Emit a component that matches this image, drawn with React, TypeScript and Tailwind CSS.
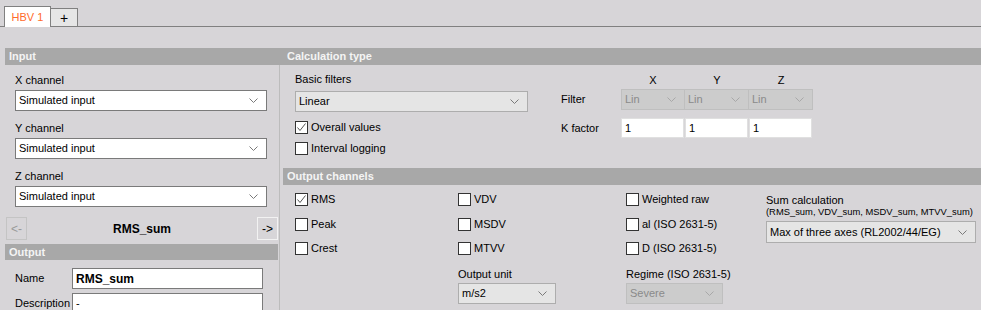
import React from "react";

function Chevron({ color = "#7a7a7a" }: { color?: string }) {
  return (
    <svg width="9" height="5" viewBox="0 0 9 5" className="shrink-0">
      <path d="M0.5 0.5 L4.5 4.5 L8.5 0.5" fill="none" stroke={color} strokeWidth="1" />
    </svg>
  );
}

type SelVariant = "white" | "grey" | "disabled";

function Select({ value, variant, className }: { value: string; variant: SelVariant; className: string }) {
  const v =
    variant === "white"
      ? "bg-white border-[#7a7a7a] text-black"
      : variant === "grey"
      ? "bg-[#e5e5e5] border-[#adadad] text-black"
      : "bg-[#cccccc] border-[#bfbfbf] text-[#8a8a8a]";
  return (
    <div className={`flex items-center justify-between border pl-[3px] pr-[8px] ${v} ${className}`}>
      <span className="leading-none">{value}</span>
      <Chevron color={variant === "disabled" ? "#a8a8a8" : "#7a7a7a"} />
    </div>
  );
}

function Check({ label, checked = false, className = "" }: { label: string; checked?: boolean; className?: string }) {
  return (
    <div className={`flex items-center h-[13px] ${className}`}>
      <div className="w-[13px] h-[13px] border border-[#333333] bg-white flex items-center justify-center shrink-0">
        {checked && (
          <svg width="11" height="11" viewBox="0 0 11 11">
            <path d="M1.5 5.5 L4 8.5 L9.5 1.5" fill="none" stroke="#555555" strokeWidth="1" />
          </svg>
        )}
      </div>
      <span className="ml-[3px] leading-none">{label}</span>
    </div>
  );
}

function Header({ title, className = "" }: { title: string; className?: string }) {
  return (
    <div className={`bg-[#a8a8a8] text-[#f4f4f4] font-bold pl-[4px] flex items-center ${className}`}>{title}</div>
  );
}

export default function App() {
  return (
    <div className="w-[981px] h-[310px] overflow-hidden bg-[#d7d5d8] text-[11px] text-black font-['Liberation_Sans',Arial,sans-serif]">
      {/* Tabs */}
      <div className="flex items-end h-[27px] pl-[4px] border-b border-[#808080]">
        <div className="h-[21px] w-[47px] -mb-px bg-white border border-b-0 border-[#808080] flex items-center justify-center text-[#ff6a2a] text-[11px]">
          HBV 1
        </div>
        <div className="h-[18px] w-[27px] bg-[#e6e6e6] border border-b-0 border-l-0 border-[#808080] flex items-center justify-center text-[14px] leading-none">
          +
        </div>
      </div>

      <div className="flex mt-[21px] pl-[5px]">
        {/* Left column */}
        <div className="w-[278px] shrink-0 flex flex-col">
          <Header title="Input" className="h-[17px]" />
          <div className="mr-[3px] border-r border-[#bcbcbc] flex flex-col h-[300px]">
            <div className="ml-[10px] mt-[8px] h-[14px] flex items-center">X channel</div>
            <Select value="Simulated input" variant="white" className="ml-[10px] mt-[3px] w-[252px] h-[21px]" />
            <div className="ml-[10px] mt-[10px] h-[14px] flex items-center">Y channel</div>
            <Select value="Simulated input" variant="white" className="ml-[10px] mt-[3px] w-[252px] h-[21px]" />
            <div className="ml-[10px] mt-[10px] h-[14px] flex items-center">Z channel</div>
            <Select value="Simulated input" variant="white" className="ml-[10px] mt-[3px] w-[252px] h-[21px]" />
            <div className="mt-[10px] h-[23px] flex items-center pl-[1px] pr-[1px]">
              <div className="w-[21px] h-[23px] border border-[#c4c4c4] flex items-center justify-center text-[#9a9a9a] text-[12px]">
                &lt;-
              </div>
              <div className="flex-1 text-center font-bold text-[12px]">RMS_sum</div>
              <div className="w-[21px] h-[23px] border border-[#f2f2f2] flex items-center justify-center text-[12px]">
                -&gt;
              </div>
            </div>
            <Header title="Output" className="h-[16px] mt-[4px] mr-[1px]" />
            <div className="mt-[8px] flex items-center h-[21px]">
              <span className="w-[67px] pl-[10px]">Name</span>
              <div className="w-[191px] h-[21px] bg-white border border-[#7a7a7a] pl-[3px] flex items-center font-bold text-[12px]">
                RMS_sum
              </div>
            </div>
            <div className="mt-[4px] flex items-center h-[21px]">
              <span className="w-[67px] pl-[10px]">Description</span>
              <div className="w-[191px] h-[21px] bg-white border border-[#7a7a7a] pl-[3px] flex items-center">-</div>
            </div>
          </div>
        </div>

        {/* Right column */}
        <div className="flex-1 flex flex-col">
          <Header title="Calculation type" className="h-[17px]" />
          <div className="h-[103px] flex pl-[12px]">
            <div className="w-[233px] flex flex-col">
              <div className="mt-[7px] h-[14px] flex items-center">Basic filters</div>
              <Select value="Linear" variant="grey" className="mt-[5px] w-[233px] h-[21px]" />
              <Check label="Overall values" checked className="mt-[9px]" />
              <Check label="Interval logging" className="mt-[8px]" />
            </div>
            <div className="ml-[33px] flex flex-col">
              <div className="mt-[7px] h-[14px] grid grid-cols-[60px_64px_64px_64px] items-center">
                <span />
                <span className="text-center">X</span>
                <span className="text-center">Y</span>
                <span className="text-center">Z</span>
              </div>
              <div className="mt-[3px] grid grid-cols-[60px_64px_64px_64px] h-[21px] items-center">
                <span>Filter</span>
                <Select value="Lin" variant="disabled" className="h-[21px] pr-[4px]" />
                <Select value="Lin" variant="disabled" className="h-[21px] pr-[4px] border-l-0" />
                <Select value="Lin" variant="disabled" className="h-[21px] pr-[4px] border-l-0" />
              </div>
              <div className="mt-[8px] grid grid-cols-[60px_64px_64px_64px] h-[20px] items-center">
                <span>K factor</span>
                <div className="h-[20px] w-[63px] bg-white border border-[#e0e0e0] pl-[3px] flex items-center">1</div>
                <div className="h-[20px] w-[63px] bg-white border border-[#e0e0e0] pl-[3px] flex items-center">1</div>
                <div className="h-[20px] w-[63px] bg-white border border-[#e0e0e0] pl-[3px] flex items-center">1</div>
              </div>
            </div>
          </div>

          <Header title="Output channels" className="h-[17px]" />
          <div className="grid grid-cols-[163px_168px_140px_1fr] pl-[12px]">
            <div className="flex flex-col">
              <Check label="RMS" checked className="mt-[8px]" />
              <Check label="Peak" className="mt-[12px]" />
              <Check label="Crest" className="mt-[11px]" />
            </div>
            <div className="flex flex-col">
              <Check label="VDV" className="mt-[8px]" />
              <Check label="MSDV" className="mt-[12px]" />
              <Check label="MTVV" className="mt-[11px]" />
              <div className="mt-[12px] h-[14px] flex items-center">Output unit</div>
              <Select value="m/s2" variant="grey" className="mt-[2px] w-[98px] h-[21px]" />
            </div>
            <div className="flex flex-col">
              <Check label="Weighted raw" className="mt-[8px]" />
              <Check label="al (ISO 2631-5)" className="mt-[12px]" />
              <Check label="D (ISO 2631-5)" className="mt-[11px]" />
              <div className="mt-[12px] h-[14px] flex items-center">Regime (ISO 2631-5)</div>
              <Select value="Severe" variant="disabled" className="mt-[2px] w-[97px] h-[21px]" />
            </div>
            <div className="flex flex-col">
              <div className="mt-[8px] h-[14px] flex items-center">Sum calculation</div>
              <div className="h-[10px] flex items-center text-[9.4px] whitespace-nowrap">(RMS_sum, VDV_sum, MSDV_sum, MTVV_sum)</div>
              <Select value="Max of three axes (RL2002/44/EG)" variant="grey" className="mt-[4px] w-[210px] h-[22px]" />
            </div>
          </div>
        </div>
      </div>
    </div>
  );
}
